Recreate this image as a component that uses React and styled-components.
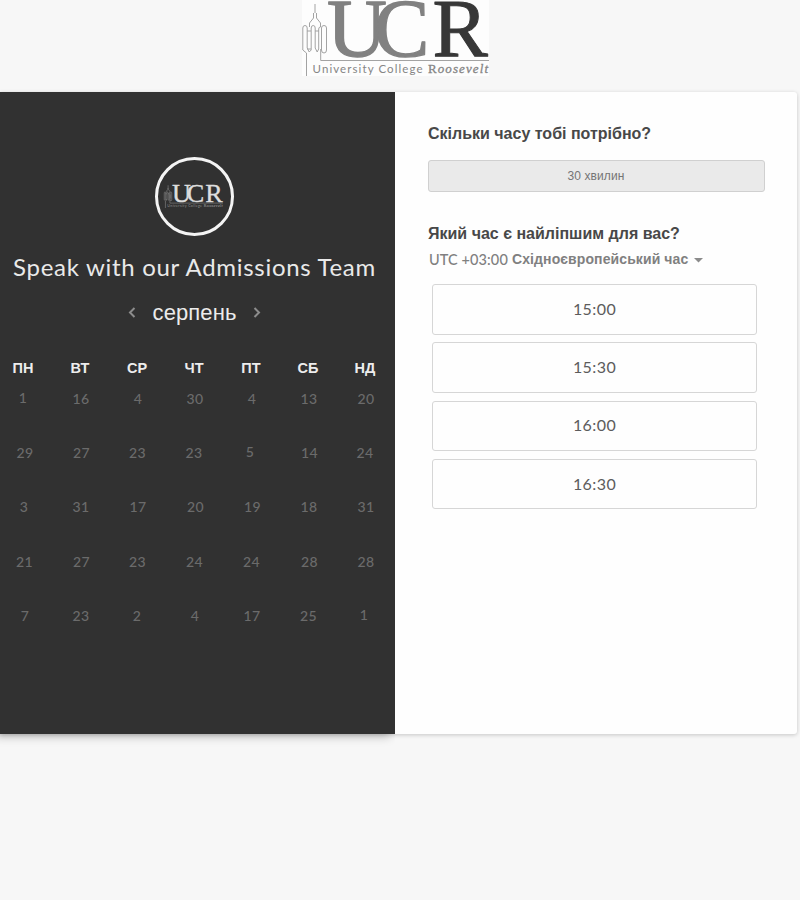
import React from 'react';
import styled, { createGlobalStyle } from 'styled-components';

const GlobalStyle = createGlobalStyle`
  *, *::before, *::after { box-sizing: border-box; }
  body { margin: 0; background: #f7f7f7; overflow: hidden; }
  button { font: inherit; cursor: pointer; }
`;

const Page = styled.div`
  width: 800px;
  height: 900px;
  background: #f7f7f7;
  font-family: Lato, 'Liberation Sans', sans-serif;
  overflow: hidden;
`;

const Header = styled.header`
  height: 92px;
  padding-left: 302px;
`;

const LogoImage = styled.svg`
  display: block;
  overflow: visible;
`;

const Card = styled.main`
  display: flex;
  width: 797px;
  height: 642px;
  background: #fefefe;
  border-radius: 0 3px 3px 0;
  box-shadow: 0 1px 4px rgba(0, 0, 0, 0.2);
`;

const CalendarPanel = styled.section`
  display: flex;
  flex-direction: column;
  align-items: center;
  width: 395px;
  height: 642px;
  padding-top: 65px;
  background: #313131;
  box-shadow: -5px 3px 9px rgba(0, 0, 0, 0.22);
  clip-path: inset(0 0 -20px 0);
`;

const Avatar = styled.div`
  display: flex;
  align-items: center;
  justify-content: center;
  width: 79px;
  height: 79px;
  margin: 0 6px 1px 0;
  padding: 0 3px 2px 0;
  border: 3px solid #f4f4f4;
  border-radius: 50%;
`;

const Title = styled.h1`
  margin: 14px 0 0;
  padding-right: 6px;
  height: 32px;
  font-size: 24px;
  font-weight: 400;
  line-height: 31px;
  letter-spacing: 0.7px;
  white-space: nowrap;
  color: #e9e9e9;
`;

const MonthBar = styled.div`
  display: flex;
  align-items: center;
  gap: 15px;
  height: 30px;
  margin-top: 15px;
  padding-right: 6px;
`;

const MonthName = styled.h2`
  width: 87px;
  margin: 0;
  font: 400 22px/30px 'Liberation Sans', sans-serif;
  letter-spacing: 0.1px;
  text-align: center;
  color: #ececec;
`;

const ArrowButton = styled.button`
  display: flex;
  width: 9px;
  height: 14px;
  padding: 0;
  border: 0;
  background: none;
  color: #8c8c8c;
`;

const MonthGrid = styled.div`
  display: grid;
  grid-template-columns: repeat(7, 57px);
  grid-template-rows: 24px repeat(5, 54.3px);
  width: 399px;
  margin: 28px 0 0 -5px;
`;

const WeekDay = styled.div`
  font: 700 14.5px/24px 'Liberation Sans', sans-serif;
  text-align: center;
  padding-right: 2px;
  color: #ededed;
`;

const Day = styled.div`
  padding-top: 8.8px;
  font-size: 14px;
  font-weight: 500;
  line-height: 20px;
  letter-spacing: 0.4px;
  text-align: center;
  color: #6b6b6b;
  transform: translate(${(p) => p.$dx}px, ${(p) => p.$dy}px);
`;

const BookingPanel = styled.section`
  display: flex;
  flex-direction: column;
  width: 402px;
  padding: 31px 32px 0 33px;
`;

const Question = styled.h3`
  margin: 0;
  height: 22px;
  font: 700 16px/22px 'Liberation Sans', sans-serif;
  white-space: nowrap;
  color: #484848;
`;

const Duration = styled.button`
  height: 32px;
  margin: 15px 0 31px;
  padding: 0 1px 0 0;
  border: 1px solid #d0d0d0;
  border-radius: 3px;
  background: #eaeaea;
  color: #757575;
  font: 12px/28px 'Liberation Sans', sans-serif;
  letter-spacing: 0.1px;
`;

const ZonePicker = styled.div`
  display: flex;
  align-items: center;
  height: 20px;
  margin: 4px 0 0 1px;
  color: #808080;
  white-space: nowrap;
`;

const ZoneOffset = styled.span`
  width: 83px;
  font-size: 14.5px;
  font-weight: 500;
  letter-spacing: 0.1px;
`;

const ZoneName = styled.span`
  width: 177px;
  margin-right: 5px;
  font: 700 14px/20px 'Liberation Sans', sans-serif;
  letter-spacing: 0.1px;
`;

const Caret = styled.svg`
  position: relative;
  top: 1px;
`;

const Slots = styled.div`
  display: flex;
  flex-direction: column;
  gap: 7.8px;
  width: 325px;
  margin: 15px 0 0 4px;
`;

const Slot = styled.button`
  height: 50.5px;
  padding: 0 0 2px;
  border: 1px solid #d6d6d6;
  border-radius: 3px;
  background: #fefefe;
  color: #5c5c5c;
  font-size: 16px;
  letter-spacing: 0.4px;
`;

const weekDays = ['ПН', 'ВТ', 'СР', 'ЧТ', 'ПТ', 'СБ', 'НД'];

// Each entry: label, then optional optical offsets.
const days = [
  [1, -1, -1], [16], [4], [30], [4], [13], [20],
  [29, 1], [27, 0.5], [23, -0.5], [23, -1], [5, -2, -1], [14, 0.5], [24, -1],
  [3], [31], [17], [20, 0.5], [19, 0.5], [18], [31],
  [21, 0.5], [27, 0.5], [23, -0.5], [24, -0.5], [24, -0.5], [28, 0.5], [28],
  [7, 1], [23], [2, -1], [4], [17], [25, -0.5], [1, -2, -1],
];

const times = ['15:00', '15:30', '16:00', '16:30'];

function CollegeLogo({ width, height, inverse }) {
  const main = inverse ? '#dedede' : '#818181';
  const caption = inverse ? '#8f8f8f' : '#858585';
  const strong = inverse ? '#dedede' : '#373737';
  const line = inverse ? '#858585' : '#a3a3a3';
  return (
    <LogoImage width={width} height={height} viewBox="0 0 187 76" role="img" aria-label="UCR">
      {!inverse && <rect width="187" height="76" fill="#fdfdfd" />}
      <g fill="none" stroke={line} strokeWidth={inverse ? 2 : 1}>
        <path d="M13 4v9M11.500 13v5l-4 5v4M14.500 13v5l4 5v4" />
        <path d="M4.500 76V53L.8 50V28q0-2.500 2.200-2.500T5.200 28v20l2 4 2-2V28q0-2.500 2-2.500t2 2.500v20l2 4 1.500-3V29q0-2 1.800-2" />
        <path d="M5 31h4M5 49h4M13 31h4M19.500 46V28q0-2.500 2.500-2.500t2.500 2.500v22q0 3-2.500 3t-2.500-3V33M18.700 49v11.500H187" />
      </g>
      <g fontFamily="'Liberation Serif', serif" fontSize="83" strokeLinejoin="round">
        <text x="25" y="56" fill={main} stroke={main} strokeWidth="1.300">U</text>
        <text x="72" y="56" fill={main} stroke={main} strokeWidth="1.300">C</text>
        <text x="130.500" y="56" fill={strong} stroke={strong} strokeWidth="1">R</text>
      </g>
      <text x="10.500" y="73" fontFamily="Lato, sans-serif" fontSize="11.500" fill={caption} textLength="110">
        University College
      </text>
      <text x="126" y="73" fontFamily="'Liberation Serif', serif" fontSize="13" fill={caption} stroke={caption} strokeWidth=".3" textLength="60">
        R<tspan fontStyle="italic">oosevelt</tspan>
      </text>
    </LogoImage>
  );
}

function Arrow({ label, path }) {
  return (
    <ArrowButton aria-label={label}>
      <svg width="9" height="14" viewBox="0 0 9 14" fill="none" stroke="currentColor" strokeWidth="2">
        <path d={path} />
      </svg>
    </ArrowButton>
  );
}

export default function App() {
  return (
    <Page>
      <GlobalStyle />
      <Header>
        <CollegeLogo width={187} height={76} />
      </Header>
      <Card>
        <CalendarPanel>
          <Avatar>
            <CollegeLogo width={59} height={24} inverse />
          </Avatar>
          <Title>Speak with our Admissions Team</Title>
          <MonthBar>
            <Arrow label="Попередній місяць" path="M7.500 2 3 6.500 7.500 11" />
            <MonthName>серпень</MonthName>
            <Arrow label="Наступний місяць" path="M1.500 2 6 6.500 1.500 11" />
          </MonthBar>
          <MonthGrid>
            {weekDays.map((d) => <WeekDay key={d}>{d}</WeekDay>)}
            {days.map(([label, dx = 0, dy = 0], i) => (
              <Day key={i} $dx={dx} $dy={dy}>{label}</Day>
            ))}
          </MonthGrid>
        </CalendarPanel>
        <BookingPanel>
          <Question>Скільки часу тобі потрібно?</Question>
          <Duration>30 хвилин</Duration>
          <Question>Який час є найліпшим для вас?</Question>
          <ZonePicker>
            <ZoneOffset>UTC +03:00</ZoneOffset>
            <ZoneName>Східноєвропейський час</ZoneName>
            <Caret width="9" height="5" viewBox="0 0 9 5"><path d="M0 0h9L4.500 4.500z" fill="#8b8b8b" /></Caret>
          </ZonePicker>
          <Slots>
            {times.map((t) => <Slot key={t}>{t}</Slot>)}
          </Slots>
        </BookingPanel>
      </Card>
    </Page>
  );
}
